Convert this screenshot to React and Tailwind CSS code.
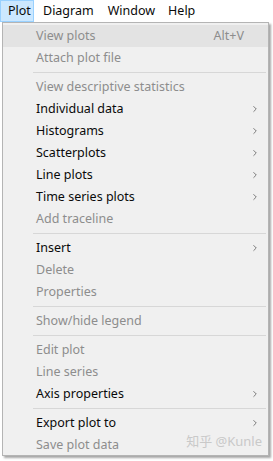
import { ChevronRight } from 'lucide-react';

const font = { fontFamily: '"Noto Sans", "Noto Sans CJK SC", sans-serif' };

const groups = [
    [
        { label: 'View plots', shortcut: 'Alt+V', disabled: true, hover: true },
        { label: 'Attach plot file', disabled: true },
    ],
    [
        { label: 'View descriptive statistics', disabled: true },
        { label: 'Individual data', sub: true },
        { label: 'Histograms', sub: true },
        { label: 'Scatterplots', sub: true },
        { label: 'Line plots', sub: true },
        { label: 'Time series plots', sub: true },
        { label: 'Add traceline', disabled: true },
    ],
    [
        { label: 'Insert', sub: true },
        { label: 'Delete', disabled: true },
        { label: 'Properties', disabled: true },
    ],
    [{ label: 'Show/hide legend', disabled: true }],
    [
        { label: 'Edit plot', disabled: true },
        { label: 'Line series', disabled: true },
        { label: 'Axis properties', sub: true },
    ],
    [
        { label: 'Export plot to', sub: true },
        { label: 'Save plot data', disabled: true },
    ],
];

function MenuItem({ item }) {
    return (
        <div
            className={`flex items-center h-[22px] pl-[33px] pr-[8px] text-[12.5px] ${
                item.hover ? 'bg-[#e3e3e3]' : ''
            } ${item.disabled ? 'text-[#8d8d8d]' : 'text-[#0a0a0a]'}`}
        >
            <span className="flex-1">{item.label}</span>
            {item.shortcut && <span className="mr-[16px]">{item.shortcut}</span>}
            {item.sub && <ChevronRight size={10} strokeWidth={1.5} className="text-[#333]" />}
        </div>
    );
}

export default function App() {
    return (
        <div className="w-[273px] h-[461px] bg-white overflow-hidden" style={font}>
            <div className="flex items-center h-[22px] text-[12.5px] text-[#0a0a0a]">
                <div className="h-full flex items-center pl-[7px] pr-[2px] w-[34px] bg-[#cce8ff] border border-[#99d1ff]">Plot</div>
                <div className="ml-[9px]">Diagram</div>
                <div className="ml-[14px]">Window</div>
                <div className="ml-[13px]">Help</div>
            </div>
            <div className="relative ml-[2px] w-[267px] h-[434px] bg-[#f0f0f0] border border-[#b4b4b4] shadow-[2px_2px_2px_rgba(0,0,0,0.35)] pt-[2px]">
                {groups.map((group, gi) => (
                    <div key={gi}>
                        {gi > 0 && <div className="ml-[30px] mr-[2px] my-[3px] h-px bg-[#d7d7d7]" />}
                        {group.map((item) => (
                            <MenuItem key={item.label} item={item} />
                        ))}
                    </div>
                ))}
                <div className="absolute right-[6px] bottom-[4px] text-[13px] text-[#c9c9c9]">知乎 @Kunle</div>
            </div>
        </div>
    );
}
